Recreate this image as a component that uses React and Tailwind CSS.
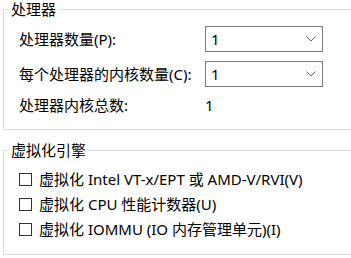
import React from 'react';

const Select = ({ value }) => (
  <div className="h-[26px] w-[118px] border border-[#7a7a7a] bg-white flex items-center justify-between pl-[5px] pr-[6px]">
    <span>{value}</span>
    <svg width="10" height="6" viewBox="0 0 10 6" className="text-[#6b6b6b]">
      <path d="M0.5 0.5 L5 5 L9.5 0.5" fill="none" stroke="currentColor" strokeWidth="1" />
    </svg>
  </div>
);

const Check = ({ label }) => (
  <label className="h-[25px] flex items-center gap-[7px]">
    <span className="w-[13px] h-[13px] border border-[#333333] bg-white" />
    <span>{label}</span>
  </label>
);

export default function App() {
  return (
    <div
      className="w-[351px] h-[258px] bg-white overflow-hidden text-[15px] leading-[17px] text-black"
      style={{ fontFamily: '"Noto Sans", "Noto Sans CJK SC", sans-serif' }}
    >
      <fieldset className="ml-[3px] w-[360px] border border-[#dcdcdc] pb-[14px]">
        <legend className="ml-[4px] px-[3px] pt-px">处理器</legend>
        <div className="pl-[15px] pt-[8px] grid grid-cols-[186px_118px] gap-y-[9px] items-center">
          <div>处理器数量(P):</div>
          <Select value="1" />
          <div>每个处理器的内核数量(C):</div>
          <Select value="1" />
          <div className="h-[20px] flex items-center -mt-[1px]">处理器内核总数:</div>
          <div className="h-[20px] flex items-center -mt-[1px]">1</div>
        </div>
      </fieldset>

      <fieldset className="ml-[3px] mt-[11px] w-[360px] border border-[#dcdcdc] pb-[12px]">
        <legend className="ml-[4px] px-[3px] pt-px">虚拟化引擎</legend>
        <div className="pl-[15px] pt-[8px] flex flex-col">
          <Check label="虚拟化 Intel VT-x/EPT 或 AMD-V/RVI(V)" />
          <Check label="虚拟化 CPU 性能计数器(U)" />
          <Check label="虚拟化 IOMMU (IO 内存管理单元)(I)" />
        </div>
      </fieldset>
    </div>
  );
}
